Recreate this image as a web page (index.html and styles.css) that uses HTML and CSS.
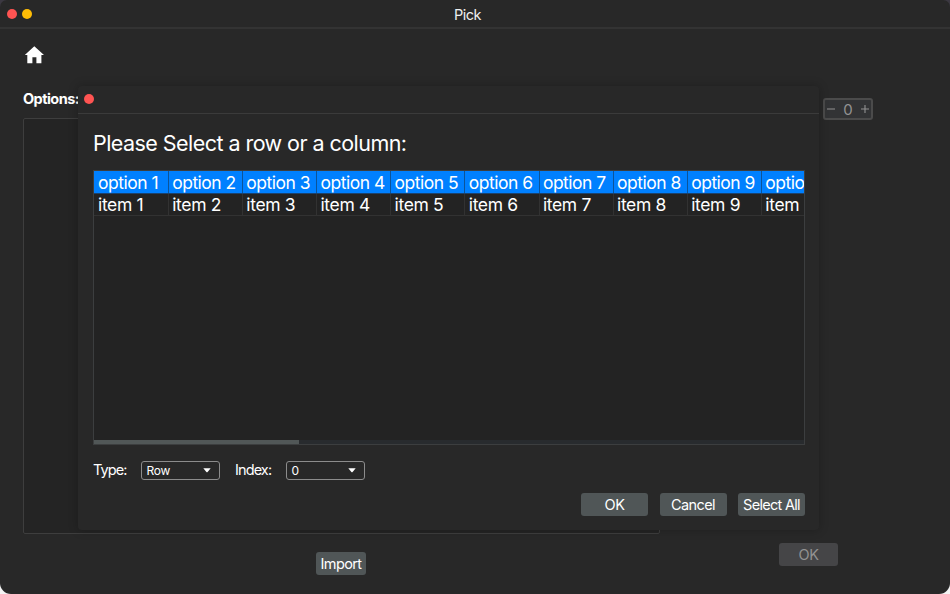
FILE: index.html
```
<!DOCTYPE html>
<html lang="en">
<head>
<meta charset="utf-8">
<title>Pick</title>
<link rel="stylesheet" href="styles.css">
</head>
<body>
<div class="window">
  <header class="titlebar">
    <div class="lights"><i class="dot red"></i><i class="dot yellow"></i></div>
    <span class="t-title">Pick</span>
  </header>
  <main class="content">
    <svg class="home" viewBox="0 0 20 18"><path d="M10.3 0.2 20 9H17.4V17.2H12.4V11.3H8.4V17.2H3.3V9H0.8Z" fill="#fff"/></svg>
    <div class="work">
      <section class="options">
        <span class="t-options">Options:</span>
        <div class="list"></div>
        <button class="btn import"><span class="t-import">Import</span></button>
      </section>
      <aside class="side">
        <div class="stepper">
          <svg class="sign" viewBox="0 0 8 8"><path d="M0 4H8" /></svg>
          <span class="t-zero">0</span>
          <svg class="sign" viewBox="0 0 8 8"><path d="M0 4H8M4 0V8" /></svg>
        </div>
        <button class="btn disabled"><span class="t-ok">OK</span></button>
      </aside>
    </div>
  </main>
</div>
<div class="dialog">
  <header class="dialog-bar"><i class="dot red"></i></header>
  <div class="dialog-body">
    <h1 class="heading"><span class="t-heading">Please Select a row or a column:</span></h1>
    <div class="table">
      <div class="row selected">
        <div class="cell">option 1</div><div class="cell">option 2</div><div class="cell">option 3</div><div class="cell">option 4</div><div class="cell">option 5</div><div class="cell">option 6</div><div class="cell">option 7</div><div class="cell">option 8</div><div class="cell">option 9</div><div class="cell last">optio</div>
      </div>
      <div class="row">
        <div class="cell">item 1</div><div class="cell">item 2</div><div class="cell">item 3</div><div class="cell">item 4</div><div class="cell">item 5</div><div class="cell">item 6</div><div class="cell">item 7</div><div class="cell">item 8</div><div class="cell">item 9</div><div class="cell last">item</div>
      </div>
      <div class="track"><div class="thumb"></div></div>
    </div>
    <div class="fields">
      <label class="label type"><span class="t-type">Type:</span></label>
      <div class="select"><span class="t-row">Row</span><svg class="caret" viewBox="0 0 8 5"><path d="M0.3 0.3H7.7L4.6 4Q4 4.5 3.4 4Z" fill="#fff"/></svg></div>
      <label class="label index"><span class="t-index">Index:</span></label>
      <div class="select"><span class="t-sel0">0</span><svg class="caret" viewBox="0 0 8 5"><path d="M0.3 0.3H7.7L4.6 4Q4 4.5 3.4 4Z" fill="#fff"/></svg></div>
    </div>
    <div class="actions">
      <button class="btn"><span class="t-ok">OK</span></button>
      <button class="btn"><span class="t-cancel">Cancel</span></button>
      <button class="btn"><span class="t-all">Select All</span></button>
    </div>
  </div>
</div>
</body>
</html>
```
FILE: styles.css
```
* { box-sizing: border-box; }
html { background: linear-gradient(#3b3841 50%, #f4f4f4 50%); height: 100%; }
body { margin: 0; width: 950px; height: 594px; overflow: hidden; position: relative; font-family: Inter, "Liberation Sans", sans-serif; font-size: 14.5px; color: #fff; }
.window { width: 950px; height: 594px; background: #282828; border-radius: 7px 7px 11px 11px; overflow: hidden; }
.titlebar { height: 29px; border-bottom: 2px solid #333; display: grid; grid-template-columns: 1fr auto 1fr; align-items: center; padding: 0 8px 0 6.5px; color: #eee; }
.titlebar .t-title { line-height: 18px; padding: 2px 0 0; margin-left: -13.5px; letter-spacing: -0.55px; }
.lights { display: flex; gap: 5px; }
.dot { display: block; width: 10px; height: 10px; border-radius: 50%; }
.red { background: #ff5452; }
.yellow { background: #ffbd06; }
.content { padding: 17px 23px 0; }
.home { display: block; width: 20px; height: 18px; margin-left: 1px; }
.work { display: flex; margin-top: 25px; justify-content: space-between; }
.options { width: 637px; display: flex; flex-direction: column; }
.t-options { height: 20px; line-height: 20px; font-weight: 700; font-size: 14.5px; letter-spacing: -0.55px; margin-bottom: 9px; }
.list { height: 416px; border: 1px solid #3e3e3e; border-radius: 2px; background: #242424; }
.btn { height: 23px; width: 67px; padding: 0; border: 0; border-radius: 3px; background: #505657; color: #fff; font: 14.5px/24px Inter, "Liberation Sans", sans-serif; letter-spacing: -0.6px; white-space: nowrap; }
.btn span { display: inline-block; }
.btn .t-ok { letter-spacing: -0.4px; }
.import { width: 50px; margin: 18px 0 0 293px; }
.side { width: 50px; margin: 9px 54px 0 0; display: flex; flex-direction: column; align-items: flex-end; justify-content: space-between; }
.side .disabled { width: 59px; background: #454547; color: #929292; margin: 0 35px 9px 0; }
.stepper { width: 50px; height: 22px; border: 2px solid #4b4b4b; border-radius: 3px; background: #323335; display: flex; align-items: center; justify-content: space-between; padding: 0 2px; color: #929292; }
.sign { width: 8px; height: 8px; fill: none; stroke: #929292; stroke-width: 1.1; }
.t-zero { font-size: 15px; line-height: 20px; padding-top: 2px; }
.dialog { position: absolute; left: 78px; top: 86px; width: 741px; height: 444px; background: #282828; border-radius: 4px; box-shadow: 0 0 10px 1px rgba(0,0,0,.2); }
.dialog-bar { height: 28px; border-bottom: 1px solid #3b3b3b; display: flex; align-items: center; padding: 0 0 1px 6px; }
.dialog-body { padding: 17px 14px 0 15px; }
.heading { margin: 0 0 15px; height: 24px; font-size: 21.5px; line-height: 24px; font-weight: 400; letter-spacing: -0.55px; white-space: nowrap; }
.table { height: 275px; border: 1px solid #3c3e3f; background: #232323; display: flex; flex-direction: column; overflow: hidden; margin-bottom: 15px; }
.row { display: grid; grid-template-columns: 74.9px repeat(8, 74.15px) 1fr; height: 22.5px; border-bottom: 1px solid #323232; flex: none; }
.cell { border-right: 1px solid #323232; padding-left: 3.3px; font-size: 17.5px; line-height: 22.5px; letter-spacing: -0.35px; white-space: nowrap; overflow: hidden; }
.cell:first-child { padding-left: 4px; }
.cell.last { border-right: 0; }
.selected { background: #0080ff; border-color: #1c426c; }
.selected .cell { border-color: #0c5498; line-height: 23px; letter-spacing: -0.5px; }
.track { margin-top: auto; height: 4px; background: #282b2e; }
.thumb { width: 205px; height: 4px; background: #515757; }
.fields { display: flex; height: 20px; align-items: center; }
.label { font-size: 14.5px; line-height: 20px; flex: none; letter-spacing: -0.9px; white-space: nowrap; }
.type { width: 48px; }
.index { width: 51px; margin-left: 15px; }
.select { width: 79px; height: 19px; border: 1px solid #8c8c8c; border-radius: 3px; display: flex; align-items: center; justify-content: space-between; padding: 0 8px 0 4.5px; font-size: 12px; line-height: 17px; flex: none; letter-spacing: -0.3px; }
.caret { width: 8px; height: 5px; }
.actions { display: flex; justify-content: flex-end; gap: 11.5px; margin-top: 13px; }
.actions .btn:last-child { letter-spacing: -0.7px; }
```
